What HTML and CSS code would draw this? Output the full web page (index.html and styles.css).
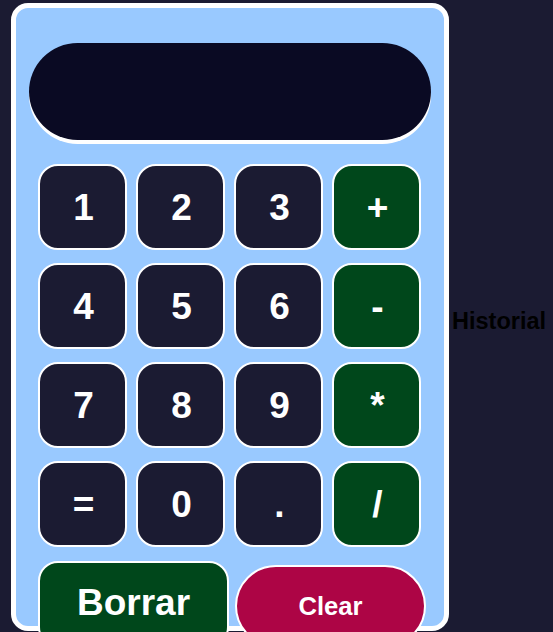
FILE: index.html
```html
<!DOCTYPE html>
<html lang="es">
<head>
<meta charset="utf-8">
<title>Calculadora</title>
<link rel="stylesheet" href="styles.css">
</head>
<body>
  <main class="calculator">
    <div class="display"></div>
    <div class="keys">
      <button class="key num">1</button>
      <button class="key num">2</button>
      <button class="key num">3</button>
      <button class="key op">+</button>
      <button class="key num">4</button>
      <button class="key num">5</button>
      <button class="key num">6</button>
      <button class="key op">-</button>
      <button class="key num">7</button>
      <button class="key num">8</button>
      <button class="key num">9</button>
      <button class="key op">*</button>
      <button class="key num">=</button>
      <button class="key num">0</button>
      <button class="key num">.</button>
      <button class="key op">/</button>
    </div>
    <div class="actions">
      <button class="borrar">Borrar</button>
      <button class="clear">Clear</button>
    </div>
  </main>
  <div class="historial">Historial</div>
</body>
</html>
```

FILE: styles.css
```css
html, body {
  margin: 0;
  padding: 0;
}

body {
  background: #1b1b32;
  height: 632px;
  overflow: hidden;
  display: flex;
  align-items: flex-start;
  font-family: "Liberation Sans", Arial, sans-serif;
}

.calculator {
  box-sizing: border-box;
  width: 438px;
  height: 628px;
  margin: 3px 0 0 11px;
  border: 5px solid #ffffff;
  border-radius: 17px;
  background: #99c9ff;
  padding-top: 35px;
  flex-shrink: 0;
}

.display {
  height: 97px;
  margin: 0 13px 0 13px;
  background: #0a0a23;
  border-radius: 50px;
  box-shadow: 0 4px 0 #ffffff;
}

.keys {
  margin: 24px 22px 0 22px;
  display: grid;
  grid-template-columns: repeat(4, 89px);
  grid-auto-rows: 86px;
  column-gap: 9px;
  row-gap: 13px;
}

.key,
.borrar,
.clear {
  box-sizing: border-box;
  border: 2px solid #ffffff;
  color: #ffffff;
  font-family: "Liberation Sans", Arial, sans-serif;
  font-weight: bold;
  padding: 0;
  margin: 0;
  display: flex;
  align-items: center;
  justify-content: center;
}

.key {
  border-radius: 20px;
  font-size: 37px;
  padding-left: 2px;
  padding-top: 2px;
}

.num {
  background: #1b1b32;
}

.op {
  background: #00471b;
}

.actions {
  margin: 14px 0 0 22px;
  display: flex;
  align-items: flex-start;
  gap: 6px;
}

.borrar {
  width: 191px;
  height: 86px;
  border-radius: 20px;
  background: #00471b;
  font-size: 37px;
  padding-bottom: 2px;
}

.clear {
  width: 191px;
  height: 82px;
  margin-top: 4px;
  border-radius: 45px;
  background: #ad0545;
  font-size: 25.6px;
}

.historial {
  align-self: center;
  margin: 10px 0 0 3px;
  color: #000000;
  font-weight: bold;
  font-size: 23.5px;
  white-space: nowrap;
}
```
